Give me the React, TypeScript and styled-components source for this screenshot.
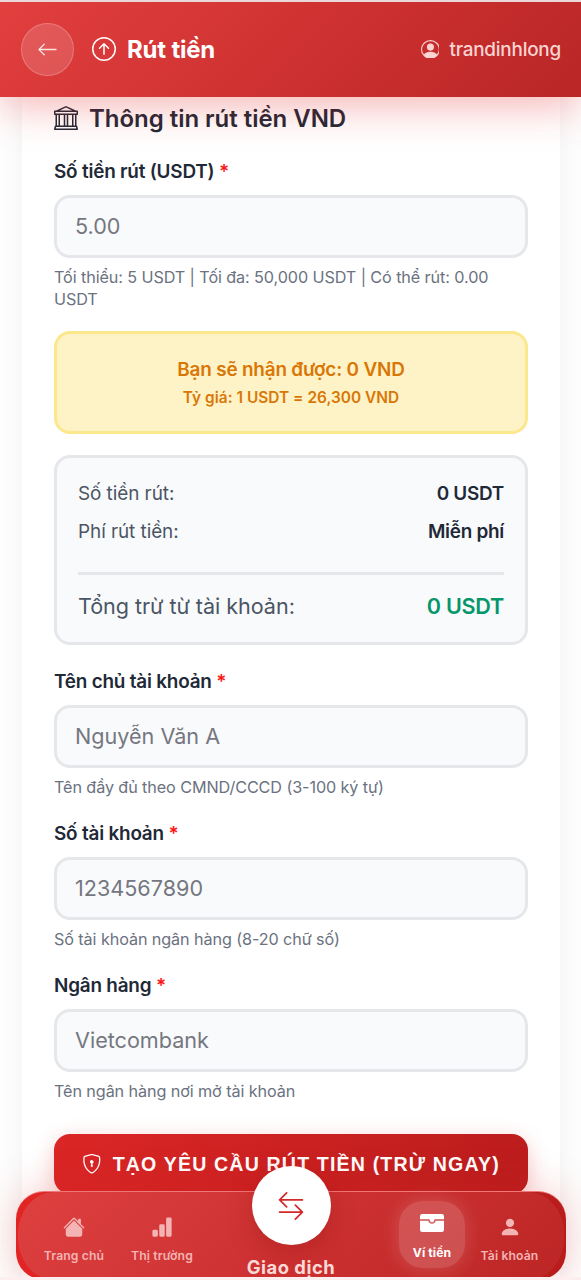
import React from 'react';
import styled, { createGlobalStyle, css } from 'styled-components';
import {
  BsArrowLeft, BsArrowUpCircle, BsPersonCircle, BsBank, BsShieldLock, BsHouseFill,
  BsBarChartFill, BsArrowLeftRight, BsWalletFill, BsPersonFill,
} from 'react-icons/bs';

const Global = createGlobalStyle`
  * { box-sizing: border-box; }
  html, body { margin: 0; height: 1280px; overflow: hidden; background: #fff; }
  body { font-family: Inter, 'Liberation Sans', sans-serif; color: #1f2937; }
  #root { height: 100%; }
`;

const Screen = styled.div`
  position: relative;
  width: 581px;
  height: 1280px;
  overflow: hidden;
  background: #fefefe;
`;

const Header = styled.header`
  position: relative;
  z-index: 3;
  display: flex;
  align-items: center;
  height: 97px;
  padding: 0 20px 1px 21px;
  color: #fff;
  background: linear-gradient(135deg, #e23f3f 0%, #cd3030 55%, #b92626 100%);
  border-top: 2px solid #ead7da;
  box-shadow: 0 8px 43px rgba(230, 38, 38, 0.36);
`;

const BackButton = styled.button`
  display: flex;
  align-items: center;
  justify-content: center;
  width: 53px;
  height: 53px;
  padding: 0;
  color: #ffe4e2;
  font-size: 21px;
  background: rgba(255, 255, 255, 0.14);
  border: 1.5px solid rgba(255, 255, 255, 0.22);
  border-radius: 50%;
`;

const HeaderTitle = styled.h1`
  display: flex;
  align-items: center;
  gap: 11px;
  flex: 1;
  margin: 0 0 0 18px;
  font-size: 24px;
  font-weight: 700;
  letter-spacing: -0.2px;
`;

const User = styled.div`
  display: flex;
  align-items: center;
  gap: 10px;
  font-size: 18.9px;
  font-weight: 500;
  letter-spacing: -0.22px;
  color: #fad4d2;
`;

const Card = styled.main`
  height: 1183px;
  margin: 0 21px 0 22px;
  padding: 3px 32px 0;
  background: #fff;
  box-shadow: 0 0 27px rgba(0, 0, 0, 0.055);
`;

const SectionTitle = styled.h2`
  display: flex;
  align-items: center;
  gap: 11px;
  height: 36px;
  margin: 0 0 22px;
  font-size: 24px;
  font-weight: 600;
  letter-spacing: -0.03px;
`;

const Field = styled.section<{ $space: number }>`
  margin-bottom: ${(p) => p.$space}px;
`;

const Label = styled.label`
  display: block;
  height: 27px;
  margin-bottom: 10px;
  font-size: 18.9px;
  line-height: 27px;
  font-weight: 600;
  letter-spacing: -0.2px;
`;

const Required = styled.span`
  color: #fb1414;
`;

const Input = styled.input`
  display: block;
  width: 100%;
  height: 63px;
  padding: 0 18px 1px;
  font: 400 21.6px Inter, sans-serif;
  background: #f9fafc;
  border: 3px solid #e6e7ea;
  border-radius: 16px;
  &::placeholder { color: #757780; opacity: 1; }
`;

const Hint = styled.p`
  margin: 8px 0 0;
  font-size: 16.2px;
  line-height: 22px;
  letter-spacing: -0.1px;
  color: #6b7280;
`;

const RateBox = styled.section`
  display: flex;
  flex-direction: column;
  align-items: center;
  height: 103px;
  margin-bottom: 21px;
  padding-top: 22px;
  color: #d97706;
  background: #fef3c7;
  border: 3px solid #fbe78c;
  border-radius: 16px;
`;

const Receive = styled.div`
  font-size: 18.9px;
  line-height: 28px;
  font-weight: 600;
  letter-spacing: -0.18px;
`;

const Rate = styled.div`
  font-size: 15.4px;
  line-height: 28px;
  font-weight: 600;
  letter-spacing: 0.03px;
`;

const Summary = styled.section`
  height: 190px;
  margin-bottom: 23px;
  padding: 17px 21px;
  background: #f9fafc;
  border: 3px solid #e6e7ea;
  border-radius: 16px;
`;

const SummaryRow = styled.div<{ $total?: boolean }>`
  display: flex;
  justify-content: space-between;
  height: 38px;
  font-size: 18.9px;
  line-height: 38px;
  letter-spacing: -0.05px;
  color: #4b5563;
  ${(p) => p.$total && css`
    height: 64px;
    margin-top: 21px;
    font-size: 21.6px;
    line-height: 63px;
    border-top: 3px solid #e5e7eb;
  `}
`;

const Amount = styled.span<{ $green?: boolean }>`
  font-weight: 600;
  letter-spacing: -0.26px;
  color: ${(p) => (p.$green ? '#059669' : '#1f2937')};
`;

const Submit = styled.button`
  display: flex;
  align-items: center;
  justify-content: center;
  gap: 11px;
  width: 100%;
  height: 60px;
  padding: 0;
  color: #fff;
  font: 700 19.6px 'Liberation Sans', sans-serif;
  letter-spacing: 1.15px;
  white-space: nowrap;
  background: linear-gradient(135deg, #dc2626, #b91c1c);
  border: 0;
  border-radius: 16px;
  box-shadow: 0 5px 20px rgba(220, 38, 38, 0.25);
`;

const BottomNav = styled.nav`
  position: absolute;
  z-index: 2;
  left: 16px;
  top: 1191px;
  display: grid;
  grid-template-columns: 100px 76px 182px 100px 55px;
  width: 550px;
  height: 89px;
  padding: 0 8px;
  background: linear-gradient(90deg, #e32424, #b91c1c);
  border-top: 1.5px solid #ef7777;
  border-radius: 28px;
  box-shadow: 0 0 43px rgba(220, 38, 38, 0.25);
  &::before {
    content: '';
    position: absolute;
    z-index: -1;
    inset: 0 2px;
    border-radius: 36px / 42px;
    background: linear-gradient(135deg, #de4040, #cc3030 55%, #bd2626);
  }
`;

const NavItem = styled.a<{ $active?: boolean }>`
  justify-self: center;
  display: flex;
  flex-direction: column;
  align-items: center;
  gap: 10px;
  width: 92px;
  padding-top: 24px;
  color: #f4b4b3;
  font-size: 12.2px;
  line-height: 16px;
  font-weight: 600;
  letter-spacing: 0.12px;
  white-space: nowrap;
  svg { font-size: 22px; }
  ${(p) => p.$active && css`
    width: 66px;
    height: 67px;
    margin-top: 9px;
    padding-top: 10px;
    color: #fff;
    font-weight: 700;
    letter-spacing: 0.1px;
    background: rgba(255, 255, 255, 0.18);
    border-radius: 24px;
    box-shadow: 0 0 20px rgba(255, 255, 255, 0.18);
    svg { font-size: 24px; }
  `}
`;

const Trade = styled.a`
  display: flex;
  flex-direction: column;
  align-items: center;
  margin-top: -26px;
  height: 112px;
  color: #fbd9d7;
  font-size: 18.4px;
  line-height: 24px;
  font-weight: 700;
  letter-spacing: 0.5px;
`;

const TradeDisc = styled.span`
  display: flex;
  align-items: center;
  justify-content: center;
  flex: none;
  width: 79px;
  height: 79px;
  margin-bottom: 10px;
  color: #d12a2a;
  font-size: 28px;
  background: #fff;
  border-radius: 50%;
  box-shadow: 0 8px 24px rgba(150, 20, 20, 0.35);
`;

const Strip = styled.div`
  position: absolute;
  z-index: 4;
  left: 0;
  right: 0;
  bottom: 0;
  height: 3px;
  background: #fdeff0;
`;

interface FormFieldProps { label: string; placeholder: string; hint: string; space: number }

const FormField = ({ label, placeholder, hint, space }: FormFieldProps) => (
  <Field $space={space}>
    <Label>{label} <Required>*</Required></Label>
    <Input placeholder={placeholder} />
    <Hint>{hint}</Hint>
  </Field>
);

export default function App() {
  return (
    <Screen>
      <Global />
      <Header>
        <BackButton><BsArrowLeft /></BackButton>
        <HeaderTitle><BsArrowUpCircle /> Rút tiền</HeaderTitle>
        <User><BsPersonCircle /> trandinhlong</User>
      </Header>
      <Card>
        <SectionTitle><BsBank /> Thông tin rút tiền VND</SectionTitle>
        <FormField label="Số tiền rút (USDT)" placeholder="5.00" hint="Tối thiểu: 5 USDT | Tối đa: 50,000 USDT | Có thể rút: 0.00 USDT" space={21} />
        <RateBox>
          <Receive>Bạn sẽ nhận được: 0 VND</Receive>
          <Rate>Tỷ giá: 1 USDT = 26,300 VND</Rate>
        </RateBox>
        <Summary>
          <SummaryRow>Số tiền rút: <Amount>0 USDT</Amount></SummaryRow>
          <SummaryRow>Phí rút tiền: <Amount>Miễn phí</Amount></SummaryRow>
          <SummaryRow $total>Tổng trừ từ tài khoản: <Amount $green>0 USDT</Amount></SummaryRow>
        </Summary>
        <FormField label="Tên chủ tài khoản" placeholder="Nguyễn Văn A" hint="Tên đầy đủ theo CMND/CCCD (3-100 ký tự)" space={22} />
        <FormField label="Số tài khoản" placeholder="1234567890" hint="Số tài khoản ngân hàng (8-20 chữ số)" space={22} />
        <FormField label="Ngân hàng" placeholder="Vietcombank" hint="Tên ngân hàng nơi mở tài khoản" space={32} />
        <Submit><BsShieldLock /> TẠO YÊU CẦU RÚT TIỀN (TRỪ NGAY)</Submit>
      </Card>
      <BottomNav>
        <NavItem><BsHouseFill /> Trang chủ</NavItem>
        <NavItem><BsBarChartFill /> Thị trường</NavItem>
        <Trade><TradeDisc><BsArrowLeftRight /></TradeDisc>Giao dịch</Trade>
        <NavItem $active><BsWalletFill /> Ví tiền</NavItem>
        <NavItem><BsPersonFill /> Tài khoản</NavItem>
      </BottomNav>
      <Strip />
    </Screen>
  );
}
